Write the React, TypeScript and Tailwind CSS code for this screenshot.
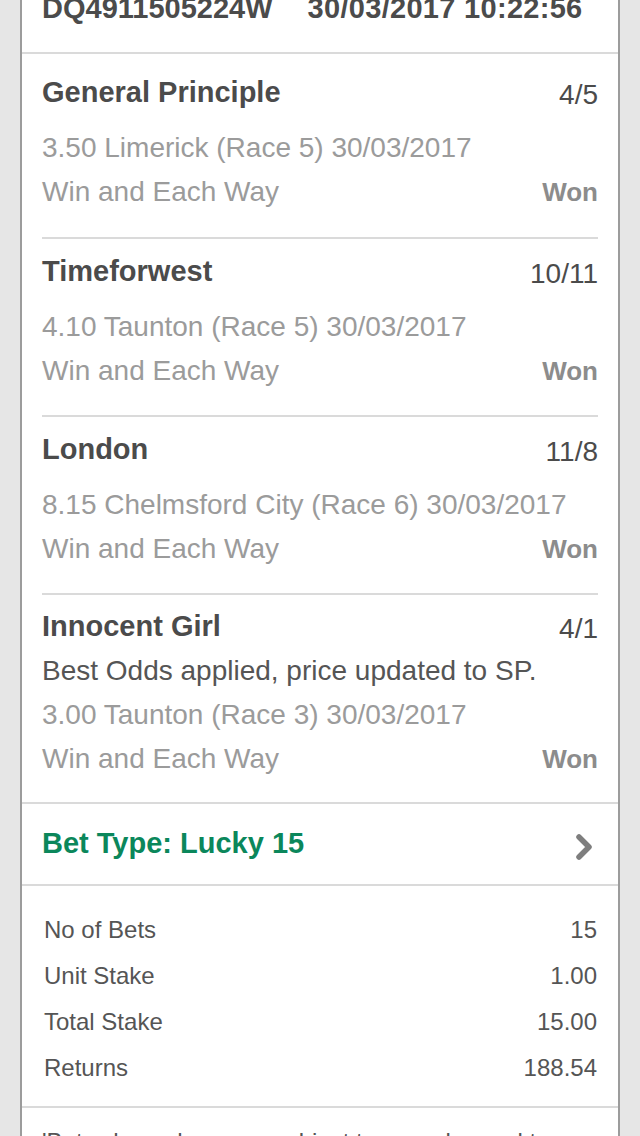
type Selection = { name: string; odds: string; note?: string; race: string; market: string; result: string }

const SELECTIONS: Selection[] = [
  { name: 'General Principle', odds: '4/5', race: '3.50 Limerick (Race 5) 30/03/2017', market: 'Win and Each Way', result: 'Won' },
  { name: 'Timeforwest', odds: '10/11', race: '4.10 Taunton (Race 5) 30/03/2017', market: 'Win and Each Way', result: 'Won' },
  { name: 'London', odds: '11/8', race: '8.15 Chelmsford City (Race 6) 30/03/2017', market: 'Win and Each Way', result: 'Won' },
  {
    name: 'Innocent Girl',
    odds: '4/1',
    note: 'Best Odds applied, price updated to SP.',
    race: '3.00 Taunton (Race 3) 30/03/2017',
    market: 'Win and Each Way',
    result: 'Won',
  },
]

const SUMMARY = [
  ['No of Bets', '15'],
  ['Unit Stake', '1.00'],
  ['Total Stake', '15.00'],
  ['Returns', '188.54'],
]

// one leg of the bet; the last one has no inner divider and a note line
function SelectionRow({ s, first, last }: { s: Selection; first: boolean; last: boolean }) {
  return (
    <div
      className={
        (first ? 'pt-[20px] pb-[23px] ' : last ? 'pt-[13px] pb-[21px] ' : 'pt-[14px] pb-[22px] ') +
        (last ? '' : 'border-b-2 border-[#dadada]')
      }
    >
      <div className="h-[36px] flex items-center justify-between">
        <span className="text-[29px] font-bold text-[#4b4b4b] leading-[36px]">{s.name}</span>
        <span className="text-[28px] text-[#4b4b4b] leading-[36px] mt-[6px]">{s.odds}</span>
      </div>
      {s.note ? (
        <div className="mt-[5px] text-[28px] leading-[44px] text-[#555555]">{s.note}</div>
      ) : (
        <div className="h-[16px]" />
      )}
      <div className="text-[28px] leading-[44px] text-[#9b9b9b]">{s.race}</div>
      <div className="flex items-center justify-between text-[28px] leading-[44px]">
        <span className="text-[#9b9b9b]">{s.market}</span>
        <span className="text-[26px] font-bold text-[#8c8c8c]">{s.result}</span>
      </div>
    </div>
  )
}

export default function App() {
  return (
    <div
      className="h-[1136px] overflow-hidden bg-[#e6e6e6]"
      style={{ fontFamily: '"Liberation Sans", Arial, sans-serif' }}
    >
      <div className="ml-[20px] w-[600px] bg-white border-x-2 border-[#9c9c9c]">
        {/* receipt header, scrolled half out of view */}
        <div className="h-[54px] px-[20px] flex flex-col border-b-2 border-[#dadada]">
          <div className="-mt-[10px] flex gap-[35px] text-[29px] font-bold leading-[36px] text-[#4b4b4b] whitespace-nowrap">
            <span>DQ4911505224W</span>
            <span className="tracking-[0.3px]">30/03/2017 10:22:56</span>
          </div>
        </div>

        <div className="px-[20px]">
          {SELECTIONS.map((s, i) => (
            <SelectionRow key={s.name} s={s} first={i === 0} last={i === SELECTIONS.length - 1} />
          ))}
        </div>

        <div className="h-[82px] pl-[20px] pr-[23px] border-t-2 border-[#dadada] flex items-center justify-between">
          <span className="text-[29px] font-bold text-[#0b875b]">Bet Type: Lucky 15</span>
          <svg width="20" height="28" viewBox="0 0 20 28" className="mt-[6px]">
            <polyline
              points="4,4 14,14 4,24"
              fill="none"
              stroke="#7e7e7e"
              strokeWidth="5.5"
              strokeLinecap="round"
              strokeLinejoin="round"
            />
          </svg>
        </div>

        <div className="pt-[21px] pb-[15px] pl-[22px] pr-[21px] border-y-2 border-[#dadada]">
          {SUMMARY.map(([label, value]) => (
            <div key={label} className="flex justify-between text-[24px] leading-[46px] text-[#555555]">
              <span>{label}</span>
              <span>{value}</span>
            </div>
          ))}
        </div>

        <div className="pt-[19px] px-[20px] pb-[40px] text-[24px] leading-[30px] text-[#555555]">
          'Bets shown here are subject to our rules and terms of settlement.
        </div>
      </div>
    </div>
  )
}
